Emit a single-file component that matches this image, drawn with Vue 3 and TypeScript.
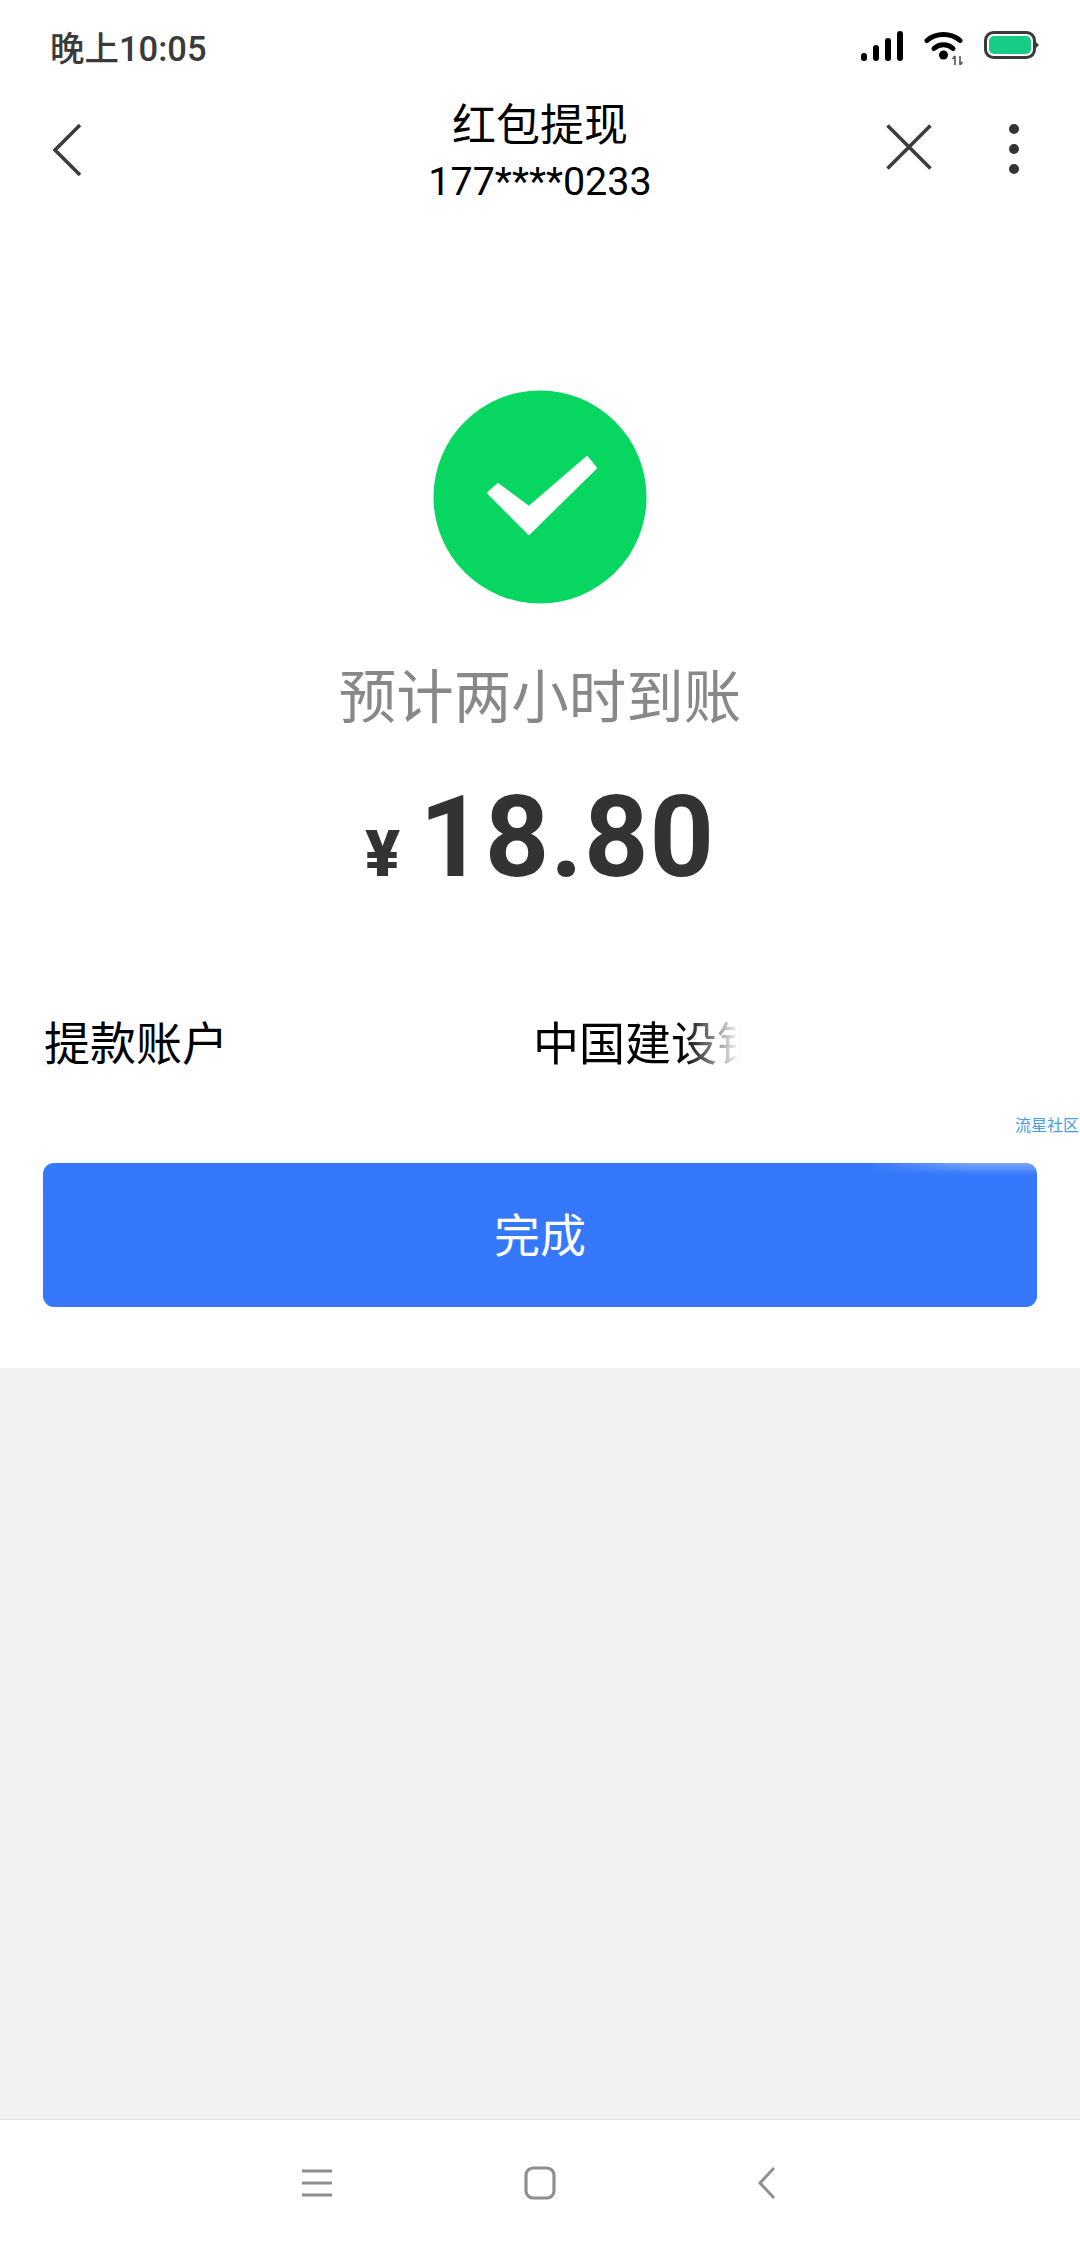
<script setup lang="ts">
const account = { label: '提款账户', bank: '中国建设银行' }
const menuLines = [6, 18, 30]
</script>

<template>
    <div class="page">
        <div class="status-bar">
            <span class="status-bar__time">晚上10:05</span>
            <div class="status-bar__icons">
                <svg class="icon-signal" width="42" height="30" viewBox="0 0 42 30">
                    <g stroke="#000" stroke-width="6" stroke-linecap="round">
                        <path d="M3 25v2" />
                        <path d="M15 17v10" />
                        <path d="M27 10v17" />
                        <path d="M39 3v24" />
                    </g>
                </svg>
                <svg class="icon-wifi" width="40" height="34" viewBox="0 0 40 34">
                    <g fill="none" stroke="#000" stroke-width="5" stroke-linecap="round">
                        <path d="M3 9.500C12 1.500 27 1.500 36 9.500" />
                        <path d="M10 17.500C15.500 12.500 23.500 12.500 29 17.500" />
                    </g>
                    <circle cx="19.500" cy="24" r="4.500" fill="#000" />
                    <path d="M31 25v9M31 25l-2.500 3M36 25v9M36 34l2.500-3" fill="none" stroke="#555" stroke-width="1.600" />
                </svg>
                <svg class="icon-battery" width="56" height="28" viewBox="0 0 56 28">
                    <rect x="1.500" y="1.500" width="49" height="25" rx="8" fill="#fff" stroke="#3a3a3a" stroke-width="3" />
                    <rect x="5" y="5" width="42" height="18" rx="5" fill="#17cc85" />
                    <path d="M52 11l3 3-3 3z" fill="#3a3a3a" />
                </svg>
            </div>
        </div>

        <div class="nav">
            <div class="nav__side">
                <svg class="nav__back" width="32" height="54" viewBox="0 0 32 54">
                    <path d="M29 2L4 27l25 25" fill="none" stroke="#3c3c3c" stroke-width="3.600" />
                </svg>
            </div>
            <div class="nav__title">
                <div class="nav__name">红包提现</div>
                <div class="nav__phone">177****0233</div>
            </div>
            <div class="nav__side nav__side--right">
                <svg class="nav__close" width="46" height="46" viewBox="0 0 46 46">
                    <path d="M1.500 1.500l43 43M44.500 1.500l-43 43" fill="none" stroke="#3c3c3c" stroke-width="3.600" />
                </svg>
                <div class="nav__more">
                    <span></span>
                    <span></span>
                    <span></span>
                </div>
            </div>
        </div>

        <div class="result">
            <svg class="result__icon" width="214" height="214" viewBox="0 0 214 214">
                <circle cx="107" cy="107" r="106.500" fill="#07d760" />
                <path d="M65 94l31 23 58-50 9 11-67 66-41-41z" fill="#fff" stroke="#fff" stroke-width="2" stroke-linejoin="round" />
            </svg>
            <div class="result__hint">预计两小时到账</div>
            <div class="result__amount">
                <span class="result__currency">¥</span>
                <span class="result__value">18.80</span>
            </div>
        </div>

        <div class="account">
            <span class="account__label">{{ account.label }}</span>
            <span class="account__bank">{{ account.bank }}</span>
        </div>

        <div class="button-wrap">
            <span class="watermark">流星社区</span>
            <div class="button">完成</div>
        </div>

        <div class="filler"></div>

        <div class="system-nav">
            <svg width="30" height="36" viewBox="0 0 30 36">
                <path v-for="y in menuLines" :key="y" :d="`M0 ${y}h30`" stroke="#8f8f8f" stroke-width="3" />
            </svg>
            <svg class="system-nav__home" width="32" height="34" viewBox="0 0 32 34">
                <rect x="2" y="2" width="28" height="30" rx="7" fill="none" stroke="#8f8f8f" stroke-width="3.200" />
            </svg>
            <svg width="20" height="34" viewBox="0 0 20 34">
                <path d="M17 2L3 17l14 15" fill="none" stroke="#8f8f8f" stroke-width="3" />
            </svg>
        </div>
    </div>
</template>

<style scoped>
    .page {
        width: 1080px;
        height: 2248px;
        display: flex;
        flex-direction: column;
        background-color: #fff;
        font-family: Roboto, "Noto Sans CJK SC", sans-serif;
        overflow: hidden;
    }

    .status-bar {
        height: 94px;
        padding: 29px 40px 0 50px;
        box-sizing: border-box;
        display: flex;
        justify-content: space-between;
        align-items: flex-start;
        flex-shrink: 0;
    }

    .status-bar__time {
        font-size: 34.500px;
        line-height: 40px;
        font-weight: 500;
        color: #3a3a3a;
    }

    .status-bar__icons {
        display: flex;
        align-items: flex-start;
        gap: 21px;
        margin-top: 2px;
    }

    .icon-wifi {
        margin-right: -1px;
    }

    .nav {
        height: 116px;
        padding: 0 61px;
        display: grid;
        grid-template-columns: 1fr auto 1fr;
        align-items: center;
        flex-shrink: 0;
    }

    .nav__side {
        display: flex;
        align-items: center;
    }

    .nav__side--right {
        justify-content: flex-end;
    }

    .nav__back {
        margin: -5px 0 0 -10px;
    }

    .nav__title {
        text-align: center;
        color: #000;
        margin-top: -4px;
    }

    .nav__name {
        font-size: 44px;
        line-height: 64px;
    }

    .nav__phone {
        font-size: 39.500px;
        line-height: 48px;
    }

    .nav__close {
        margin: -10px 77px 0 0;
    }

    .nav__more {
        display: flex;
        flex-direction: column;
        gap: 10px;
        margin-top: -6px;
    }

    .nav__more span {
        width: 10px;
        height: 10px;
        border-radius: 50%;
        background-color: #333;
    }

    .result {
        display: flex;
        flex-direction: column;
        align-items: center;
        padding-top: 180px;
        flex-shrink: 0;
    }

    .result__icon {
        display: block;
    }

    .result__hint {
        margin-top: 53px;
        font-size: 57.500px;
        line-height: 84px;
        color: #888;
    }

    .result__amount {
        display: flex;
        align-items: baseline;
        gap: 19px;
        margin-top: 32px;
        color: #333;
        font-weight: 700;
    }

    .result__currency {
        font-size: 65px;
        font-weight: 900;
        line-height: 130px;
    }

    .result__value {
        font-size: 112.500px;
        line-height: 130px;
        letter-spacing: 1px;
    }

    .account {
        display: flex;
        padding: 95px 0 0 44px;
        font-size: 46px;
        line-height: 60px;
        color: #000;
        flex-shrink: 0;
    }

    .account__label {
        width: 489px;
    }

    .account__bank {
        width: 207px;
        white-space: nowrap;
        overflow: hidden;
        -webkit-mask-image: linear-gradient(to right, #000 150px, transparent 207px);
        mask-image: linear-gradient(to right, #000 150px, transparent 207px);
    }

    .button-wrap {
        position: relative;
        padding: 89px 43px 61px;
        flex-shrink: 0;
    }

    .watermark {
        position: absolute;
        left: 1015px;
        top: 42px;
        font-size: 16px;
        line-height: 20px;
        color: #4a9be8;
        white-space: nowrap;
    }

    .button {
        position: relative;
        height: 144px;
        box-sizing: border-box;
        padding-bottom: 6px;
        border-radius: 11px;
        background-color: #3578fb;
        color: #fff;
        font-size: 46px;
        display: flex;
        align-items: center;
        justify-content: center;
        overflow: hidden;
    }

    .button::after {
        content: "";
        position: absolute;
        right: 0;
        top: 0;
        width: 170px;
        height: 12px;
        background: linear-gradient(to bottom, rgba(255, 255, 255, 0.35), rgba(255, 255, 255, 0));
        -webkit-mask-image: linear-gradient(to right, transparent, #000 60%);
        mask-image: linear-gradient(to right, transparent, #000 60%);
    }

    .filler {
        flex: 1;
        background-color: #f2f2f2;
    }

    .system-nav {
        height: 129px;
        box-sizing: border-box;
        border-top: 1px solid #e4e4e4;
        padding: 0 303px 3px 302px;
        display: flex;
        align-items: center;
        justify-content: space-between;
        flex-shrink: 0;
    }

    .system-nav__home {
        margin-left: -9px;
    }
</style>

<style>
    html, body {
        margin: 0;
        background: #fff;
    }
</style>
